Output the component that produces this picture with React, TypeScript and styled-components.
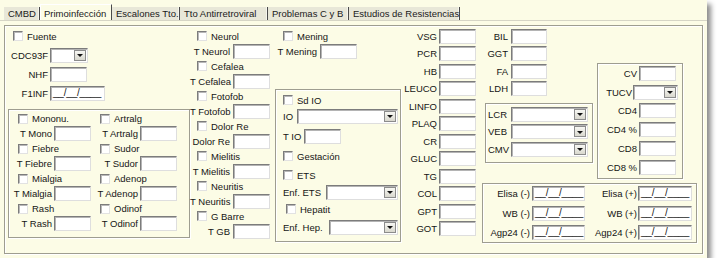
import styled, { createGlobalStyle } from 'styled-components'

const Global = createGlobalStyle`
  body { margin: 0; background: #ffffff; }
  * { box-sizing: border-box; }
`

const Window = styled.div`
  width: 707px;
  height: 258px;
  background: #fcfce6;
  box-shadow: 4px 4px 5px rgba(0, 0, 0, 0.45);
  font-family: "Liberation Sans", Arial, sans-serif;
  font-size: 9.5px;
  color: #151515;
  display: flex;
  flex-direction: column;
`

const TabStrip = styled.div`
  height: 21px;
  flex: none;
  display: flex;
  align-items: flex-end;
  padding-left: 4px;
  border-bottom: 1px solid #d6d5c6;
`

const Tab = styled.div<{ $w: number; $active?: boolean }>`
  width: ${(p) => p.$w}px;
  height: ${(p) => (p.$active ? 16 : 13)}px;
  background: ${(p) => (p.$active ? '#fcfce6' : '#e8e7d8')};
  border-right: 1px solid #4a4a4a;
  border-top: ${(p) => (p.$active ? '1px solid #ffffff' : 'none')};
  border-left: ${(p) => (p.$active ? '1px solid #ffffff' : 'none')};
  box-shadow: ${(p) => (p.$active ? 'none' : 'inset -1px 0 0 #f6f6ee')};
  padding: ${(p) => (p.$active ? '1px 0 0 3px' : '0 0 0 4px')};
  display: flex;
  align-items: center;
  white-space: nowrap;
  overflow: hidden;
  font-size: 9.5px;
  color: #1a1a1a;
`

const Panel = styled.div`
  flex: 1;
  padding: 4px 4px 4px 4px;
  display: flex;
`

const MainBox = styled.div`
  flex: 1;
  display: flex;
  border: 1px solid #9e9d90;
  box-shadow: inset 1px 1px 0 #ffffff, 1px 1px 0 #ffffff;
`

const Col = styled.div<{ $w: number; $ml?: number; $pt?: number }>`
  width: ${(p) => p.$w}px;
  margin-left: ${(p) => p.$ml ?? 0}px;
  padding-top: ${(p) => p.$pt ?? 0}px;
  flex: none;
  display: flex;
  flex-direction: column;
`

const Group = styled.div<{ $w: number; $h?: number; $mt?: number; $ml?: number; $pt?: number; $pr?: number }>`
  width: ${(p) => p.$w}px;
  height: ${(p) => (p.$h ? `${p.$h}px` : 'auto')};
  margin-top: ${(p) => p.$mt ?? 0}px;
  margin-left: ${(p) => p.$ml ?? 0}px;
  padding-top: ${(p) => p.$pt ?? 0}px;
  padding-right: ${(p) => p.$pr ?? 0}px;
  flex: none;
  border: 1px solid #9e9d90;
  box-shadow: inset 1px 1px 0 #ffffff, 1px 1px 0 #ffffff;
  display: flex;
  flex-direction: column;
`

const Split = styled.div`
  display: flex;
  align-items: flex-start;
`

const Row = styled.div<{ $h: number; $pl?: number; $mt?: number }>`
  display: flex;
  align-items: center;
  height: ${(p) => p.$h}px;
  padding-left: ${(p) => p.$pl ?? 0}px;
  margin-top: ${(p) => p.$mt ?? 0}px;
  flex: none;
`

const Label = styled.span<{ $w?: number; $left?: boolean; $gap?: number }>`
  flex: none;
  width: ${(p) => (p.$w ? `${p.$w}px` : 'auto')};
  text-align: ${(p) => (p.$left ? 'left' : 'right')};
  margin-right: ${(p) => p.$gap ?? 2}px;
  white-space: nowrap;
`

const TextBox = styled.div<{ $w: number }>`
  flex: none;
  width: ${(p) => p.$w}px;
  height: 15px;
  background: #ffffff;
  border: 1px solid;
  border-color: #7c7c7c #dedede #dedede #7c7c7c;
  box-shadow: inset 1px 1px 0 #b4b4b4;
  padding-left: 2px;
  line-height: 12px;
  font-size: 10px;
  letter-spacing: -0.2px;
  white-space: nowrap;
  overflow: hidden;
`

const ComboBox = styled(TextBox)<{ $grow?: boolean }>`
  flex: ${(p) => (p.$grow ? '1' : 'none')};
  display: flex;
  justify-content: flex-end;
  align-items: stretch;
  padding: 1px;
`

const ComboBtn = styled.span`
  width: 12px;
  background: linear-gradient(#f7f7f3, #d9d8ce);
  border: 1px solid #8c8c8c;
  display: flex;
  align-items: center;
  justify-content: center;
`

const Arrow = styled.span`
  width: 0;
  height: 0;
  border-left: 3px solid transparent;
  border-right: 3px solid transparent;
  border-top: 3px solid #111;
  margin-top: 1px;
`

const Check = styled.span`
  flex: none;
  width: 10px;
  height: 10px;
  background: #ffffff;
  border: 1px solid;
  border-color: #7c7c7c #e2e2e2 #e2e2e2 #7c7c7c;
  box-shadow: inset 1px 1px 0 #b8b8b8;
  margin-right: 4px;
`

const Combo = ({ w, grow }: { w: number; grow?: boolean }) => (
  <ComboBox $w={w} $grow={grow}>
    <ComboBtn>
      <Arrow />
    </ComboBtn>
  </ComboBox>
)

const CheckRow = ({ text, h, pl, mt }: { text: string; h: number; pl: number; mt?: number }) => (
  <Row $h={h} $pl={pl} $mt={mt}>
    <Check />
    <span>{text}</span>
  </Row>
)

const Field = ({
  text, h, lw, iw, gap = 2, date, mt,
}: { text: string; h: number; lw: number; iw: number; gap?: number; date?: boolean; mt?: number }) => (
  <Row $h={h} $mt={mt}>
    <Label $w={lw} $gap={gap}>{text}</Label>
    <TextBox $w={iw}>{date ? '__/__/____' : ''}</TextBox>
  </Row>
)

const tabs = [
  { t: 'CMBD', w: 36 },
  { t: 'Primoinfección', w: 72, active: true },
  { t: 'Escalones Tto.', w: 68 },
  { t: 'Tto Antirretroviral', w: 88 },
  { t: 'Problemas C y B', w: 81 },
  { t: 'Estudios de Resistencias', w: 111 },
]

const symLeft = [
  ['Mononu.', 'T Mono'],
  ['Fiebre', 'T Fiebre'],
  ['Mialgia', 'T Mialgia'],
  ['Rash', 'T Rash'],
]
const symRight = [
  ['Artralg', 'T Artralg'],
  ['Sudor', 'T Sudor'],
  ['Adenop', 'T Adenop'],
  ['Odinof', 'T Odinof'],
]
const neuro = [
  ['Neurol', 'T Neurol'],
  ['Cefalea', 'T Cefalea'],
  ['Fotofob', 'T Fotofob'],
  ['Dolor Re', 'Dolor Re'],
  ['Mielitis', 'T Mielitis'],
  ['Neuritis', 'T Neuritis'],
  ['G Barre', 'T GB'],
]
const labs = ['VSG', 'PCR', 'HB', 'LEUCO', 'LINFO', 'PLAQ', 'CR', 'GLUC', 'TG', 'COL', 'GPT', 'GOT']
const labs2 = ['BIL', 'GGT', 'FA', 'LDH']
const serology = [
  ['Elisa (-)', 'Elisa (+)'],
  ['WB (-)', 'WB (+)'],
  ['Agp24 (-)', 'Agp24 (+)'],
]

export default function App() {
  return (
    <>
      <Global />
      <Window>
        <TabStrip>
          {tabs.map((t) => (
            <Tab key={t.t} $w={t.w} $active={t.active}>
              {t.t}
            </Tab>
          ))}
        </TabStrip>
        <Panel>
          <MainBox>
            {/* column 1: general data + symptoms */}
            <Col $w={182} $ml={3} $pt={0.5}>
              <CheckRow text="Fuente" h={19} pl={5} />
              <Row $h={19}>
                <Label $w={40}>CDC93F</Label>
                <Combo w={38} />
              </Row>
              <Field text="NHF" h={19} lw={40} iw={37} />
              <Field text="F1INF" h={19} lw={40} iw={55} date />
              <Group $w={182} $h={129} $mt={6.5} $pt={1}>
                <Split>
                  <Col $w={86} $ml={1}>
                    {symLeft.map(([c, f]) => (
                      <div key={c}>
                        <CheckRow text={c} h={15} pl={8} />
                        <Field text={f} h={15} lw={42} iw={37} />
                      </div>
                    ))}
                  </Col>
                  <Col $w={84}>
                    {symRight.map(([c, f]) => (
                      <div key={c}>
                        <CheckRow text={c} h={15} pl={4} />
                        <Field text={f} h={15} lw={42} iw={37} />
                      </div>
                    ))}
                  </Col>
                </Split>
              </Group>
            </Col>

            {/* column 2: neurological */}
            <Col $w={82} $pt={2.5}>
              {neuro.map(([c, f]) => (
                <div key={c}>
                  <CheckRow text={c} h={15} pl={7} />
                  <Field text={f} h={15} lw={40} iw={37} gap={3} />
                </div>
              ))}
            </Col>

            {/* column 3: meningitis + IO block */}
            <Col $w={128} $ml={3} $pt={2.5}>
              <CheckRow text="Mening" h={15} pl={8} />
              <Field text="T Mening" h={15} lw={42} iw={37} gap={3} />
              <Group $w={126} $h={153} $mt={30.5} $pr={2}>
                <CheckRow text="Sd IO" h={16} pl={7} mt={2} />
                <Row $h={16} $pl={7}>
                  <Label $left $gap={4}>IO</Label>
                  <Combo w={90} grow />
                </Row>
                <Row $h={16} $pl={7} $mt={4}>
                  <Label $left $gap={3}>T IO</Label>
                  <TextBox $w={37} />
                </Row>
                <CheckRow text="Gestación" h={16} pl={7} mt={4} />
                <CheckRow text="ETS" h={16} pl={7} mt={3} />
                <Row $h={16} $pl={7} $mt={1}>
                  <Label $left $gap={5}>Enf. ETS</Label>
                  <Combo w={70} grow />
                </Row>
                <CheckRow text="Hepatit" h={16} pl={10} mt={1} />
                <Row $h={16} $pl={7} $mt={2}>
                  <Label $left $gap={6}>Enf. Hep.</Label>
                  <Combo w={70} grow />
                </Row>
              </Group>
            </Col>

            {/* column 4: lab values */}
            <Col $w={75} $pt={1.25}>
              {labs.map((l) => (
                <Field key={l} text={l} h={17.5} lw={34} iw={37} />
              ))}
            </Col>

            {/* column 5: more labs, cultures, immunology, serology */}
            <Col $w={220} $ml={2} $pt={1.25}>
              <Split>
                <Col $w={115}>
                  {labs2.map((l) => (
                    <Field key={l} text={l} h={17.5} lw={28} iw={36} gap={3} />
                  ))}
                  <Group $w={108} $ml={5} $mt={5.75} $pt={1.5}>
                    {['LCR', 'VEB', 'CMV'].map((l) => (
                      <Row key={l} $h={17.5} $pl={2}>
                        <Label $w={20} $left $gap={3}>{l}</Label>
                        <Combo w={77} />
                      </Row>
                    ))}
                    <Row $h={3.5} />
                  </Group>
                </Col>
                <Group $w={86} $ml={2} $mt={35.75}>
                  <Field text="CV" h={18.8} lw={39} iw={37} />
                  <Row $h={18.8}>
                    <Label $w={34} $gap={1}>TUCV</Label>
                    <Combo w={45} />
                  </Row>
                  <Field text="CD4" h={18.8} lw={39} iw={37} />
                  <Field text="CD4 %" h={18.8} lw={39} iw={37} />
                  <Field text="CD8" h={18.8} lw={39} iw={37} />
                  <Field text="CD8 %" h={18.8} lw={39} iw={37} />
                  <Row $h={1} />
                </Group>
              </Split>
              <Group $w={215} $ml={2} $mt={4}>
                {serology.map(([a, b]) => (
                  <Row key={a} $h={19.5}>
                    <Label $w={47} $gap={2}>{a}</Label>
                    <TextBox $w={53}>__/__/____</TextBox>
                    <Label $w={52} $gap={1}>{b}</Label>
                    <TextBox $w={54}>__/__/____</TextBox>
                  </Row>
                ))}
              </Group>
            </Col>
          </MainBox>
        </Panel>
      </Window>
    </>
  )
}
